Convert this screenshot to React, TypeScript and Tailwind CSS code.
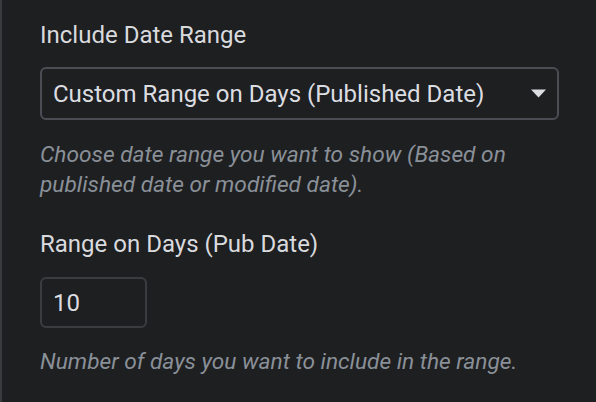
export default function App() {
  return (
    <div className="w-[596px] h-[402px] bg-[#1e1f21] border-l-2 border-[#3a3b3e] overflow-hidden font-['Roboto',_sans-serif]">
      <div className="pl-[38px] pr-[35px] pt-[20px] flex flex-col">
        <label className="text-[24px] leading-[30px] text-[#d9dade]">Include Date Range</label>
        <div className="mt-[17px] h-[53px] w-[519px] rounded-[6px] border-2 border-[#4a4e54] flex items-center justify-between pl-[11px] pr-[11px]">
          <span className="text-[24px] text-[#dcdde1]">Custom Range on Days (Published Date)</span>
          <svg width="15" height="9" viewBox="0 0 15 9">
            <path d="M0 0.5 H15 L7.5 8.5 Z" fill="#dcdde1" />
          </svg>
        </div>
        <p className="mt-[20px] text-[22.7px] leading-[30px] italic text-[#8a9098]">
          Choose date range you want to show (Based on
          <br />
          published date or modified date).
        </p>
        <label className="mt-[29px] text-[24px] leading-[30px] text-[#d9dade]">Range on Days (Pub Date)</label>
        <div className="mt-[18px] h-[51px] w-[107px] rounded-[6px] border-2 border-[#3a3c40] flex items-center pl-[11px]">
          <span className="text-[24px] text-[#dcdde1]">10</span>
        </div>
        <p className="mt-[19px] text-[22.7px] leading-[30px] italic text-[#8a9098]">
          Number of days you want to include in the range.
        </p>
      </div>
    </div>
  );
}
